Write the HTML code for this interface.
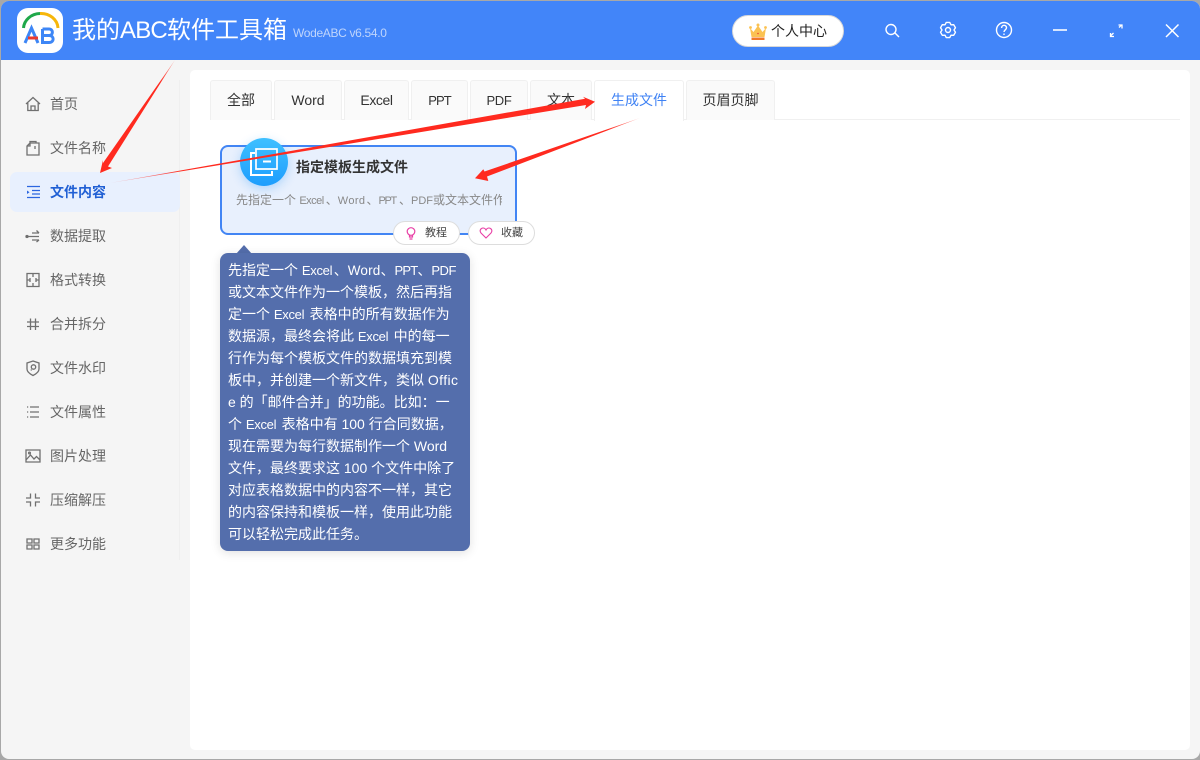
<!DOCTYPE html>
<html lang="zh"><head><meta charset="utf-8"><title>我的ABC软件工具箱</title>
<style>
*{box-sizing:border-box;margin:0;padding:0}
html,body{width:1200px;height:760px;overflow:hidden;background:#a8a8a8}
body{position:relative;font-family:"Liberation Sans","Noto Sans CJK SC",sans-serif}
#win{position:absolute;left:1px;top:1px;width:1199px;height:758px;background:#f5f5f5;border-radius:8px;overflow:hidden}
.a{position:absolute;white-space:nowrap}
.m{position:absolute;left:50px;font-size:14px;line-height:20px;color:#666;white-space:nowrap}
.i{position:absolute;left:24px;width:18px;height:18px;fill:none;stroke:#707070;stroke-width:1.3}
.t{position:absolute;top:80px;height:40px;background:#fafafa;border:1px solid #f0f0f0;border-bottom:none;border-radius:3px 3px 0 0;font-size:14px;line-height:39px;text-align:center;color:#333;white-space:nowrap}
.l{position:absolute;left:228px;font-size:14px;line-height:22px;color:#fff;white-space:nowrap}
.l .e{font-size:13px;letter-spacing:-.3px;margin-right:1.500px}
.l .w{font-size:13.500px;letter-spacing:.2px}
.l .p3{font-size:13px;letter-spacing:-.8px}
.l .pd{font-size:13px;letter-spacing:-.5px}
.d .e{font-size:11px;letter-spacing:-.5px;margin-right:2px}
.d .w{font-size:11px;letter-spacing:.4px;margin-right:1px}
.d .p3{font-size:11px;letter-spacing:-1.300px;margin-right:3px}
.d .pd{font-size:11px}
.p{position:absolute;top:221px;height:24px;background:#fff;border:1px solid #ddd;border-radius:12px;font-size:11px;line-height:22px;color:#444;white-space:nowrap}
</style></head><body>
<div id="win"></div>
<div class="a" style="left:1px;top:1px;width:1199px;height:59px;background:#4285f9;border-radius:8px 8px 0 0"></div>

<!-- logo -->
<div class="a" style="left:17px;top:8px;width:46px;height:45px;background:#fff;border-radius:11px"></div>
<svg class="a" style="left:17px;top:8px" width="46" height="45" viewBox="0 0 46 45" fill="none">
<path d="M6.500 20A17 15.500 0 0 1 23 5.500" stroke="#1fa84a" stroke-width="3"/>
<path d="M23 5.500A17 15.500 0 0 1 41 20" stroke="#f6b60a" stroke-width="3"/>
<path d="M8 35L14.500 20L21 35" stroke="#3d86f6" stroke-width="3"/>
<path d="M11 30H21" stroke="#ea3a2f" stroke-width="3"/>
<path d="M25.500 21H32C36.500 21 36.500 27.500 32 27.500H25.500M32 27.500C37.500 27.500 37.500 34.500 32 34.500H25.500V21" stroke="#3d86f6" stroke-width="3"/>
</svg>
<div class="a" style="left:72px;top:14px;font-size:24px;line-height:34px;color:#fff">我的<span style="letter-spacing:-.8px">ABC</span>软件工具箱</div>
<div class="a" style="left:293px;top:25px;font-size:12px;line-height:17px;color:#bfd5fc;letter-spacing:-.33px">WodeABC v6.54.0</div>

<!-- user pill -->
<div class="a" style="left:732px;top:15px;width:112px;height:32px;background:#fff;border-radius:16px;border:1px solid #d8d8d8"></div>
<svg class="a" style="left:749px;top:23px" width="18" height="18" viewBox="0 0 18 18">
<path d="M1 5L4.500 9L9 2.500L13.500 9L17 5L15.500 14H2.500Z" fill="#fbc252"/>
<circle cx="1.500" cy="4.500" r="1.400" fill="#fbc252"/><circle cx="9" cy="2" r="1.500" fill="#fbc252"/><circle cx="16.500" cy="4.500" r="1.400" fill="#fbc252"/>
<rect x="2.500" y="14.500" width="13" height="2.500" fill="#f0792b"/>
<circle cx="9" cy="10.500" r=".8" fill="#e8432f"/>
</svg>
<div class="a" style="left:771px;top:21px;font-size:14px;line-height:20px;color:#222">个人中心</div>

<!-- top icons -->
<svg class="a" style="left:880px;top:18px" width="310" height="26" viewBox="880 18 310 26" fill="none" stroke="#fff" stroke-width="1.400">
<circle cx="891" cy="29.500" r="5"/><path d="M895 33L899 37"/>
<path transform="translate(948 30)" stroke-linejoin="round" d="M-1.750 -7.600L1.750 -7.600L3 -5.200L5.700 -5.320L7.460 -2.280L6 0L7.460 2.280L5.700 5.320L3 5.200L1.750 7.600L-1.750 7.600L-3 5.200L-5.700 5.320L-7.460 2.280L-6 0L-7.460 -2.280L-5.700 -5.320L-3 -5.200Z"/><circle cx="948" cy="30" r="2.500"/>
<circle cx="1004" cy="30" r="7.500"/>
<path d="M1001.600 28C1001.600 24.500 1006.500 24.500 1006.500 27.800C1006.500 29.800 1004 29.800 1004 32"/><path d="M1004 33.500V35"/>
<path d="M1053 30H1067" stroke-width="1.800" stroke="#e8f0ff"/>
<path d="M1111 35.500L1113.500 33M1119 27.500L1121.500 25M1118.500 25H1122V28.500M1110.500 33V36.500H1114" stroke-width="1.300"/>
<path d="M1166 24.500L1178.500 37M1178.500 24.500L1166 37" stroke-width="1.500"/>
</svg>

<!-- sidebar -->
<div class="a" style="left:179px;top:80px;width:1px;height:480px;background:#efefef"></div>
<div class="a" style="left:10px;top:172px;width:170px;height:40px;background:#e8f0fe;border-radius:7px"></div>

<svg class="i" style="top:95px" viewBox="0 0 18 18"><path d="M2 9L9 2.500L16 9M3.800 8V15.500H14.200V8M7 15.500V11H11V15.500"/></svg>
<div class="m" style="top:94px">首页</div>
<svg class="i" style="top:139px" viewBox="0 0 18 18"><path d="M6 4H15V16H3V7L6 4ZM6 4V2.500H12V4M6 4V7H3M11 7V10"/></svg>
<div class="m" style="top:138px">文件名称</div>
<svg class="i" style="top:183px;stroke:#2b66e0" viewBox="0 0 18 18"><path d="M3 3.500H16M8 7.500H16M8 11H16M3 14.500H16" /><path d="M3 7.500L5.500 9.300L3 11Z" fill="#2b66e0" stroke="none"/></svg>
<div class="m" style="top:182px;color:#2160d4;font-weight:700">文件内容</div>
<svg class="i" style="top:227px" viewBox="0 0 18 18"><path d="M8 6H15M12.500 3.500L15 6M3 9.500H15M8 13H15M12.500 15L15 13"/><circle cx="3" cy="9.500" r="1" fill="#666"/></svg>
<div class="m" style="top:226px">数据提取</div>
<svg class="i" style="top:271px" viewBox="0 0 18 18"><path d="M3 2.500H15V15.500H3ZM9 2.500V6M9 12V15.500M3 9H6.500M11.500 9H15"/><path d="M6 7V11M12 7V11" /></svg>
<div class="m" style="top:270px">格式转换</div>
<svg class="i" style="top:315px" viewBox="0 0 18 18"><path d="M6.500 3.500V15M11.500 3.500V15M3 7H15M3 11.500H15"/></svg>
<div class="m" style="top:314px">合并拆分</div>
<svg class="i" style="top:359px" viewBox="0 0 18 18"><path d="M9 2L15 4V10C15 13 12 15 9 16.500C6 15 3 13 3 10V4Z"/><circle cx="9.500" cy="8" r="2.200"/><path d="M7.500 10.500L7 11.500"/></svg>
<div class="m" style="top:358px">文件水印</div>
<svg class="i" style="top:403px" viewBox="0 0 18 18"><path d="M6 4H15M6 9H15M6 14H15M3 4H4.200M3 9H4.200M3 14H4.200"/></svg>
<div class="m" style="top:402px">文件属性</div>
<svg class="i" style="top:447px" viewBox="0 0 18 18"><path d="M2 3H16V15H2ZM2 13L6.500 8L10 12L12.500 9.500L16 13"/><circle cx="5.500" cy="6" r=".9"/></svg>
<div class="m" style="top:446px">图片处理</div>
<svg class="i" style="top:491px" viewBox="0 0 18 18"><path d="M6.500 2.500V7H2M11.500 2.500V7H16M6.500 15.500V11H2M11.500 15.500V11H16"/></svg>
<div class="m" style="top:490px">压缩解压</div>
<svg class="i" style="top:535px" viewBox="0 0 18 18"><path d="M3 4H8V8H3ZM10 4H15V8H10ZM3 10H8V14H3ZM10 10H15V14H10Z"/></svg>
<div class="m" style="top:534px">更多功能</div>

<!-- content -->
<div class="a" style="left:190px;top:70px;width:1000px;height:680px;background:#fff;border-radius:5px"></div>
<div class="a" style="left:210px;top:119px;width:970px;height:1px;background:#f0f0f0"></div>
<div class="t" style="left:210px;width:62px">全部</div>
<div class="t" style="left:274px;width:68px">Word</div>
<div class="t" style="left:344px;width:65px;letter-spacing:-.4px">Excel</div>
<div class="t" style="left:411px;width:57px;font-size:13px;letter-spacing:-.9px">PPT</div>
<div class="t" style="left:470px;width:58px;font-size:13px;letter-spacing:-.3px">PDF</div>
<div class="t" style="left:530px;width:62px">文本</div>
<div class="t" style="left:594px;width:90px;background:#fff;color:#3f82f4;height:41px">生成文件</div>
<div class="t" style="left:686px;width:89px">页眉页脚</div>

<!-- card -->
<div class="a" style="left:220px;top:145px;width:297px;height:90px;background:#e8f0fd;border:2px solid #4285f4;border-radius:8px"></div>
<div class="a" style="left:240px;top:138px;width:48px;height:48px;border-radius:50%;background:linear-gradient(180deg,#3fc0ff,#1d9dfd);box-shadow:0 3px 10px rgba(40,150,250,.3)"></div>
<svg class="a" style="left:240px;top:138px" width="48" height="48" viewBox="0 0 48 48" fill="none" stroke="#fff" stroke-width="1.700">
<path d="M16 11H37V31H16Z"/><path d="M15 15H11V37H32V33" stroke-width="2"/><path d="M23 23.500H31" stroke-width="2"/>
</svg>
<div class="a" style="left:296px;top:157px;font-size:14px;line-height:20px;font-weight:700;color:#333">指定模板生成文件</div>
<div class="a d" style="left:236px;top:192px;width:266px;overflow:hidden;font-size:12px;line-height:17px;color:#888">先指定一个 <span class="e">Excel</span>、<span class="w">Word</span>、<span class="p3">PPT</span>、<span class="pd">PDF</span>或文本文件作为</div>

<div class="p" style="left:393px;width:67px;padding-left:31px">教程</div>
<svg class="a" style="left:404px;top:226px" width="14" height="14" viewBox="0 0 14 14" fill="none" stroke="#e83fa5" stroke-width="1.200"><circle cx="7" cy="5.500" r="3.800"/><path d="M5.500 9V11H8.500V9M5.500 13H8.500"/></svg>
<div class="p" style="left:468px;width:67px;padding-left:32px">收藏</div>
<svg class="a" style="left:479px;top:226px" width="14" height="14" viewBox="0 0 14 14" fill="none" stroke="#e83fa5" stroke-width="1.100"><path d="M7 12L2 7C0 4.500 2 2 4 2C5.500 2 6.500 3 7 4C7.500 3 8.500 2 10 2C12 2 14 4.500 12 7Z"/></svg>

<!-- tooltip -->
<svg class="a" style="left:236px;top:244px" width="16" height="10" viewBox="0 0 16 10"><path d="M0 10L8 1L16 10Z" fill="#546eac"/></svg>
<div class="a" style="left:220px;top:253px;width:250px;height:298px;background:#546eac;border-radius:8px;box-shadow:0 2px 10px rgba(0,0,0,.12)"></div>
<div class="l" style="top:259px">先指定一个 <span class="e">Excel</span>、<span class="w">Word</span>、<span class="p3">PPT</span>、<span class="pd">PDF</span></div>
<div class="l" style="top:281px">或文本文件作为一个模板，然后再指</div>
<div class="l" style="top:303px">定一个 <span class="e">Excel</span> 表格中的所有数据作为</div>
<div class="l" style="top:325px">数据源，最终会将此 <span class="e">Excel</span> 中的每一</div>
<div class="l" style="top:347px">行作为每个模板文件的数据填充到模</div>
<div class="l" style="top:369px">板中，并创建一个新文件，类似 <span style="letter-spacing:.4px">Offic</span></div>
<div class="l" style="top:391px">e 的「邮件合并」的功能。比如：一</div>
<div class="l" style="top:413px">个 <span class="e">Excel</span> 表格中有 100 行合同数据，</div>
<div class="l" style="top:435px">现在需要为每行数据制作一个 Word</div>
<div class="l" style="top:457px">文件，最终要求这 100 个文件中除了</div>
<div class="l" style="top:479px">对应表格数据中的内容不一样，其它</div>
<div class="l" style="top:501px">的内容保持和模板一样，使用此功能</div>
<div class="l" style="top:523px">可以轻松完成此任务。</div>

<!-- arrows -->
<svg class="a" style="left:0;top:0" width="1200" height="760" viewBox="0 0 1200 760">
<defs>
<linearGradient id="g1" gradientUnits="userSpaceOnUse" x1="175" y1="60" x2="100" y2="173"><stop offset="0" stop-color="#ff2a1f" stop-opacity=".4"/><stop offset=".2" stop-color="#ff2a1f"/></linearGradient>
<linearGradient id="g2" gradientUnits="userSpaceOnUse" x1="110" y1="183" x2="595" y2="102"><stop offset="0" stop-color="#ff2a1f" stop-opacity=".25"/><stop offset=".15" stop-color="#ff2a1f"/></linearGradient>
<linearGradient id="g3" gradientUnits="userSpaceOnUse" x1="640" y1="118" x2="475" y2="178"><stop offset="0" stop-color="#ff2a1f" stop-opacity=".45"/><stop offset=".2" stop-color="#ff2a1f"/></linearGradient>
</defs>
<polygon fill="url(#g1)" points="175,60 108,166.500 112,168 100,173 103,160 103,163"/>
<polygon fill="url(#g2)" points="110,183 585,98.800 583,96.700 595,101.700 585,109 586,105"/>
<polygon fill="url(#g3)" points="640,118 487,176.500 488.300,181 475,178.300 483.300,169.300 484.500,171.500"/>
</svg>
</body></html>
